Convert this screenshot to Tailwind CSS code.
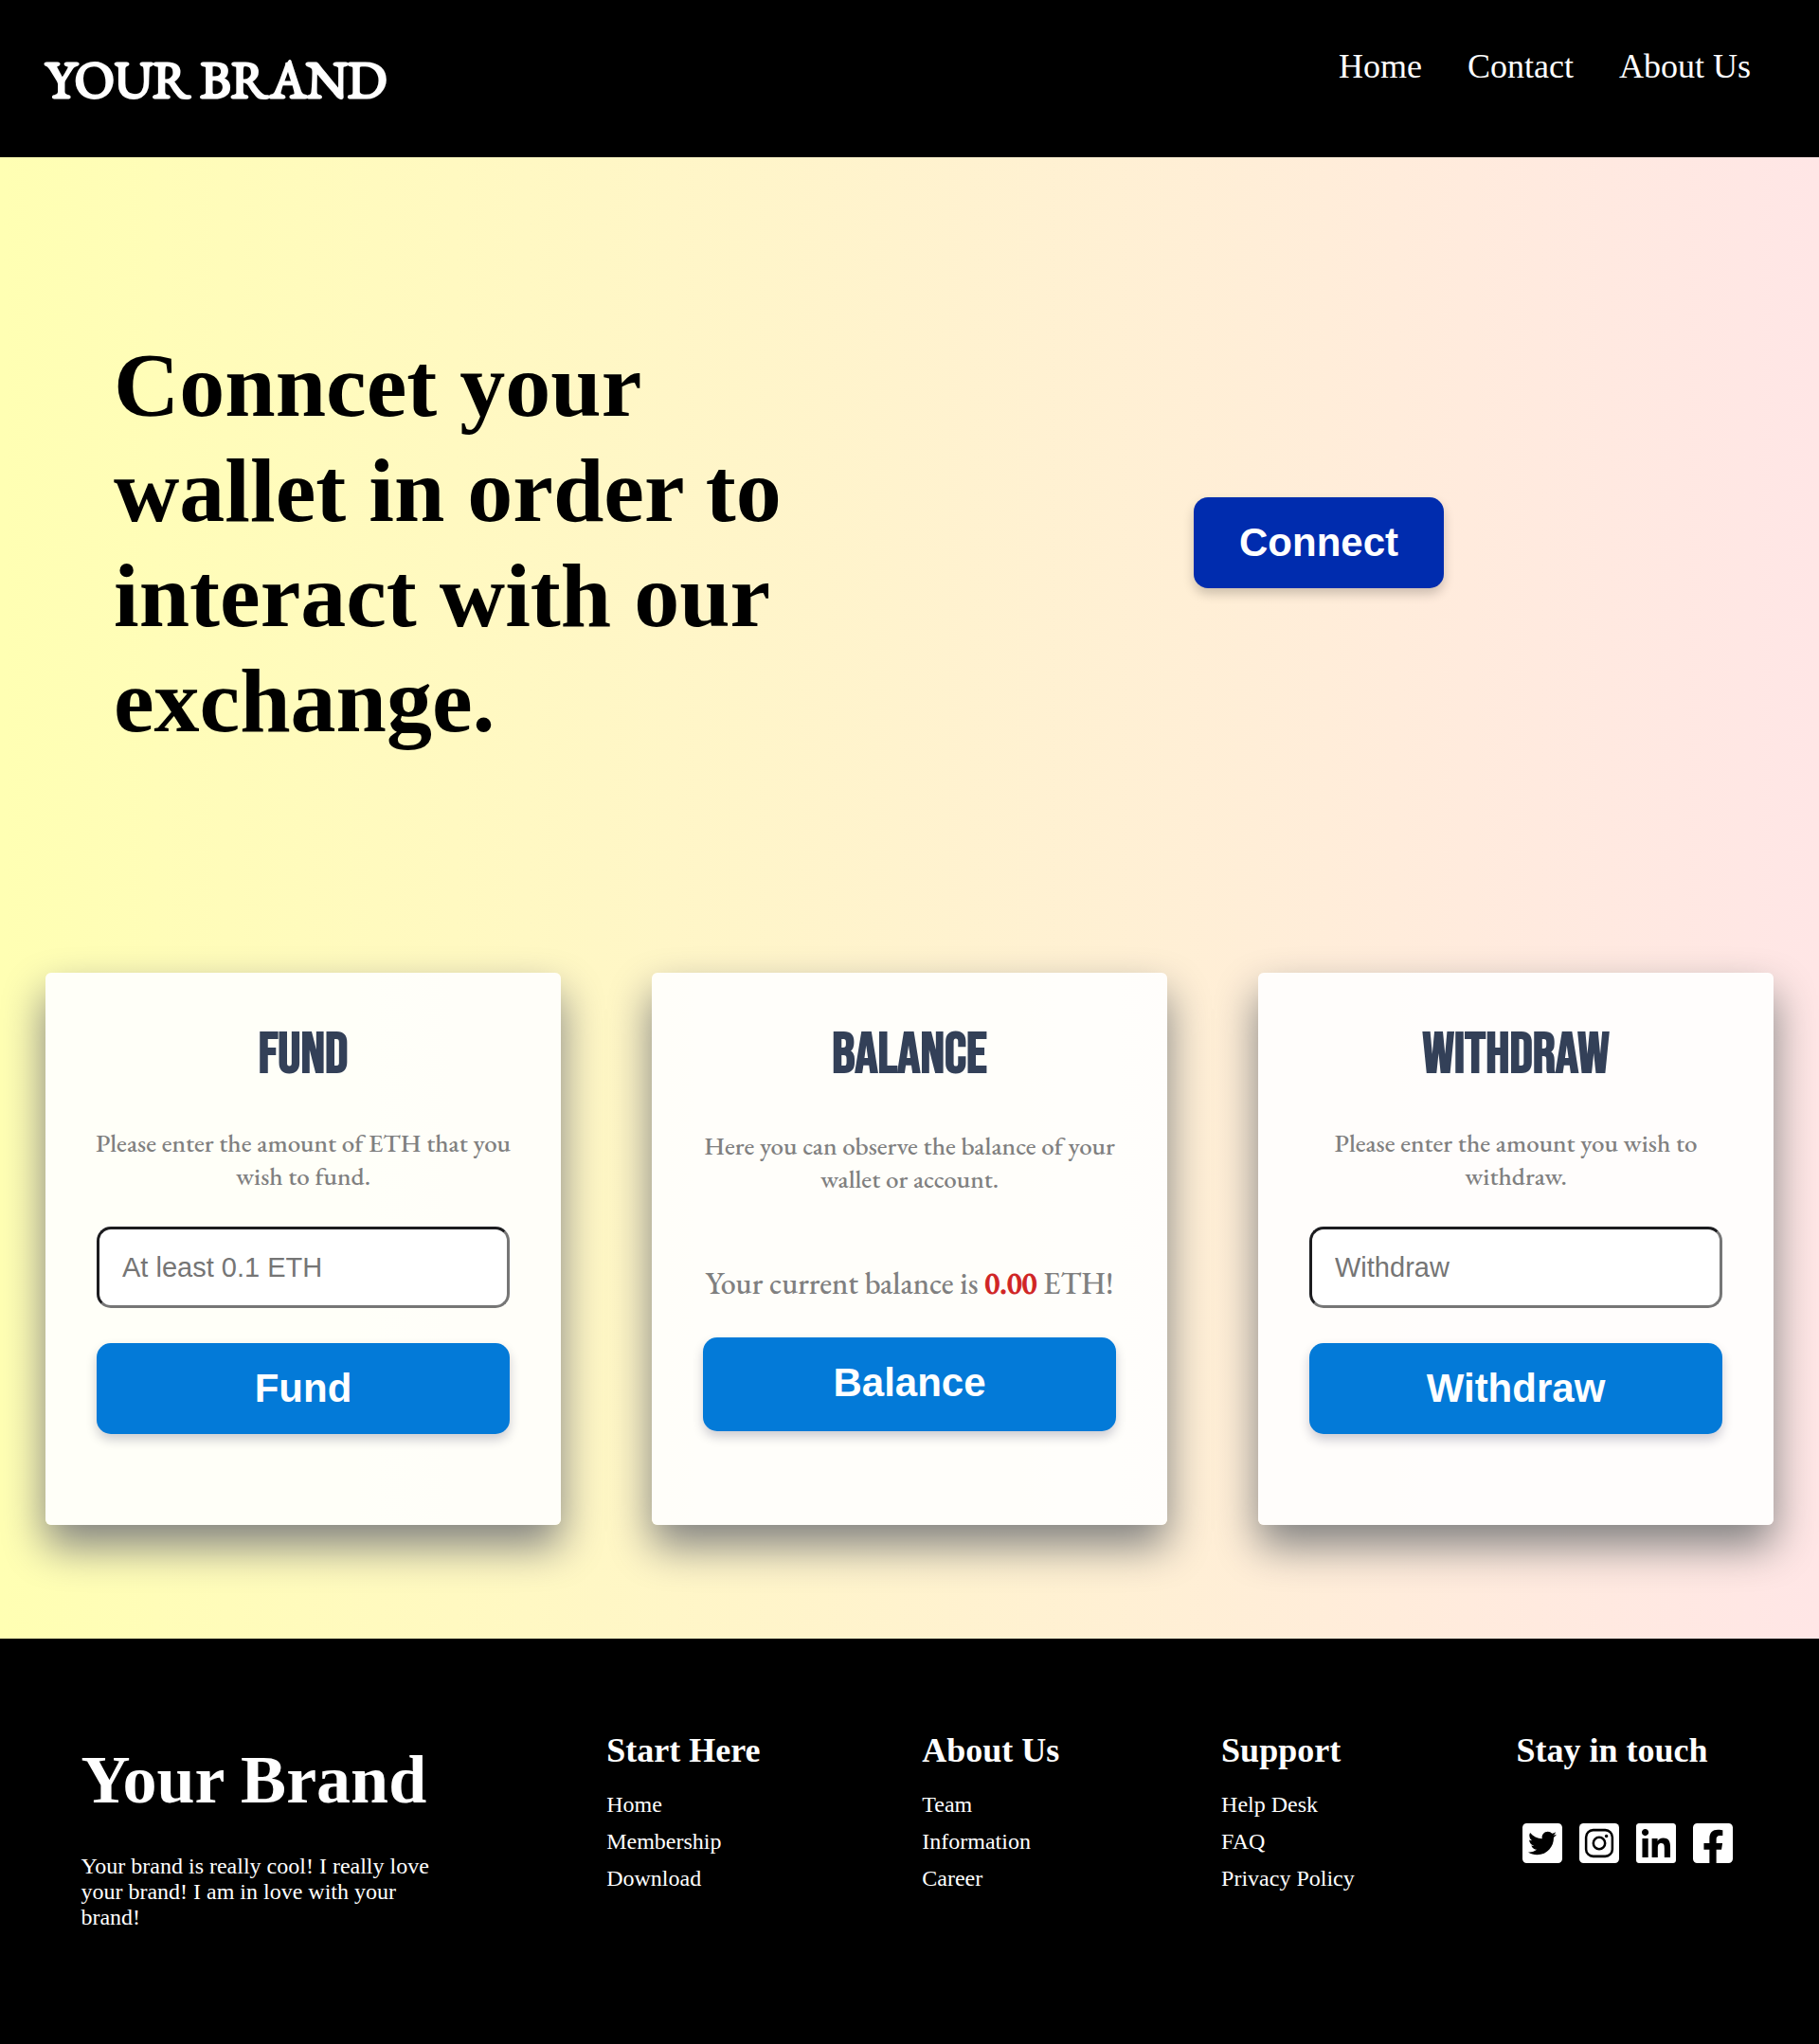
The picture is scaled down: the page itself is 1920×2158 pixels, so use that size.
<!DOCTYPE html>
<html lang="en">
<head>
<meta charset="utf-8">
<meta name="viewport" content="width=device-width, initial-scale=1">
<title>Your Brand</title>
<script src="https://cdn.jsdelivr.net/npm/@tailwindcss/browser@4"></script>
</head>
<body class="flex min-h-screen flex-col bg-black font-['Liberation_Serif',serif]">

<header class="flex items-start justify-between bg-black px-12 pt-12 pb-[46px] text-white">
  <a href="#" class="font-['EB_Garamond','Liberation_Serif',serif] text-[55px] leading-[72px] font-normal [-webkit-text-stroke:3px_white]">YOUR BRAND</a>
  <nav class="flex gap-12 pr-6 text-4xl leading-[44px]">
    <a href="#">Home</a>
    <a href="#">Contact</a>
    <a href="#">About Us</a>
  </nav>
</header>

<main class="bg-linear-to-r from-[#ffffb3] to-[#ffe6e6] pb-[120px]">
  <section class="grid grid-cols-[45%_55%] items-center pt-[185px] pb-[232px]">
    <h1 class="pl-30 text-8xl leading-[111px] font-bold text-black">Conncet your wallet in order to interact with our exchange.</h1>
    <div class="flex justify-center">
      <button type="button" class="rounded-[15px] bg-[#002cae] px-12 py-6 font-['Liberation_Sans',sans-serif] text-[42px] leading-[48px] font-bold text-white shadow-[0_6px_12px_rgba(0,0,0,0.2)]">Connect</button>
    </div>
  </section>

  <section class="grid grid-cols-3 gap-24 px-12 text-center font-['EB_Garamond','Liberation_Serif',serif] font-medium text-[#808080]">
    <form class="flex flex-col rounded-md bg-white/90 px-[54px] pt-12 pb-24 shadow-[0_22px_45px_#808080]">
      <h2 class="mb-9 font-['Bebas_Neue',Roboto,sans-serif] text-[60px] leading-[78px] font-bold text-[#334058]">FUND</h2>
      <label for="fund" class="-mx-1 text-[27px] leading-[35px]">Please enter the amount of ETH that you wish to fund.</label>
      <input id="fund" type="text" placeholder="At least 0.1 ETH" class="mt-9 h-[86px] w-full rounded-[15px] border-[3px] border-t-[#1c1c1f] border-r-[#767676] border-b-[#767676] border-l-[#1c1c1f] bg-white px-6 font-['Liberation_Sans',sans-serif] text-[29px] font-normal placeholder:text-[#757575]">
      <button type="button" class="mt-[37px] rounded-[15px] bg-[#037ad8] py-6 font-['Liberation_Sans',sans-serif] text-[42px] leading-[48px] font-bold text-white shadow-[0_6px_12px_rgba(0,0,50,0.2)]">Fund</button>
    </form>

    <div class="flex flex-col rounded-md bg-white/90 px-[54px] pt-12 pb-24 shadow-[0_22px_45px_#808080]">
      <h2 class="mb-[39px] font-['Bebas_Neue',Roboto,sans-serif] text-[60px] leading-[78px] font-bold text-[#334058]">BALANCE</h2>
      <p class="-mx-1 text-[27px] leading-[35px]">Here you can observe the balance of your wallet or account.</p>
      <p class="-mx-1 mt-[74px] text-[32px] leading-[38px] whitespace-nowrap">Your current balance is <strong class="font-medium text-[#d02424] [-webkit-text-stroke:1px_#d02424]">0.00</strong> ETH!</p>
      <button type="button" class="mt-[38px] rounded-[15px] bg-[#037ad8] pt-6 pb-[27px] font-['Liberation_Sans',sans-serif] text-[42px] leading-[48px] font-bold text-white shadow-[0_6px_12px_rgba(0,0,50,0.2)]">Balance</button>
    </div>

    <form class="flex flex-col rounded-md bg-white/90 px-[54px] pt-12 pb-24 shadow-[0_22px_45px_#808080]">
      <h2 class="mb-9 font-['Bebas_Neue',Roboto,sans-serif] text-[60px] leading-[78px] font-bold text-[#334058]">WITHDRAW</h2>
      <label for="withdraw" class="-mx-1 text-[27px] leading-[35px]">Please enter the amount you wish to<br>withdraw.</label>
      <input id="withdraw" type="text" placeholder="Withdraw" class="mt-9 h-[86px] w-full rounded-[15px] border-[3px] border-t-[#1c1c1f] border-r-[#767676] border-b-[#767676] border-l-[#1c1c1f] bg-white px-6 font-['Liberation_Sans',sans-serif] text-[29px] font-normal placeholder:text-[#757575]">
      <button type="button" class="mt-[37px] rounded-[15px] bg-[#037ad8] py-6 font-['Liberation_Sans',sans-serif] text-[42px] leading-[48px] font-bold text-white shadow-[0_6px_12px_rgba(0,0,50,0.2)]">Withdraw</button>
    </form>
  </section>
</main>

<footer class="flex grow items-start justify-around bg-black pt-[97px] pb-30 text-2xl text-white">
  <div class="w-1/5 pt-[10px]">
    <h2 class="text-7xl leading-[84px] font-bold">Your Brand</h2>
    <p class="mt-9 leading-[27px]">Your brand is really cool! I really love your brand! I am in love with your brand!</p>
  </div>
  <div>
    <h3 class="text-4xl leading-[42px] font-bold">Start Here</h3>
    <ul class="mt-[17px] leading-[39px]">
      <li><a href="#">Home</a></li>
      <li><a href="#">Membership</a></li>
      <li><a href="#">Download</a></li>
    </ul>
  </div>
  <div>
    <h3 class="text-4xl leading-[42px] font-bold">About Us</h3>
    <ul class="mt-[17px] leading-[39px]">
      <li><a href="#">Team</a></li>
      <li><a href="#">Information</a></li>
      <li><a href="#">Career</a></li>
    </ul>
  </div>
  <div>
    <h3 class="text-4xl leading-[42px] font-bold">Support</h3>
    <ul class="mt-[17px] leading-[39px]">
      <li><a href="#">Help Desk</a></li>
      <li><a href="#">FAQ</a></li>
      <li><a href="#">Privacy Policy</a></li>
    </ul>
  </div>
  <div>
    <h3 class="text-4xl leading-[42px] font-bold">Stay in touch</h3>
    <div class="mt-[53px] flex gap-3 px-[3px]">
      <a href="#" aria-label="Twitter"><svg class="size-12" viewBox="-32 0 512 512" fill="currentColor"><path d="M400 32H48C21.5 32 0 53.5 0 80v352c0 26.5 21.5 48 48 48h352c26.500 0 48-21.500 48-48V80c0-26.500-21.500-48-48-48zm-48.900 158.800c.2 2.800.2 5.700.2 8.500 0 86.700-66 186.600-186.600 186.600-37.200 0-71.700-10.800-100.700-29.400 5.300.6 10.400.8 15.800.8 30.700 0 58.900-10.400 81.400-28-28.800-.6-53-19.500-61.300-45.500 10.100 1.500 19.200 1.500 29.600-1.200-30-6.100-52.500-32.500-52.500-64.400v-.8c8.700 4.900 18.900 7.900 29.600 8.300a65.447 65.447 0 0 1-29.200-54.600c0-12.200 3.200-23.400 8.900-33.100 32.300 39.800 80.800 65.800 135.200 68.600-9.300-44.500 24-80.600 64-80.600 18.900 0 35.900 7.900 47.900 20.700 14.800-2.800 29-8.300 41.600-15.800-4.900 15.200-15.200 28-28.800 36.100 13.200-1.400 26-5.100 37.800-10.200-8.900 13.100-20.100 24.700-32.900 34z"/></svg></a>
      <a href="#" aria-label="Instagram"><svg class="size-12" viewBox="-32 0 512 512" fill="none"><rect y="32" width="448" height="448" rx="48" fill="white"/><rect x="76" y="108" width="296" height="296" rx="80" stroke="black" stroke-width="27"/><circle cx="224" cy="256" r="66" stroke="black" stroke-width="27"/><circle cx="305" cy="176" r="18" fill="black"/></svg></a>
      <a href="#" aria-label="LinkedIn"><svg class="size-12" viewBox="-32 0 512 512" fill="currentColor"><path d="M416 32H31.900C14.300 32 0 46.500 0 64.300v383.400C0 465.500 14.300 480 31.900 480H416c17.600 0 32-14.500 32-32.300V64.300c0-17.800-14.400-32.300-32-32.300zM135.400 416H69V202.200h66.500V416zm-33.200-243c-21.300 0-38.500-17.300-38.500-38.500S80.900 96 102.200 96c21.200 0 38.500 17.300 38.500 38.500 0 21.300-17.200 38.500-38.500 38.500zm282.100 243h-66.400V312c0-24.800-.5-56.700-34.500-56.700-34.600 0-39.900 27-39.900 54.900V416h-66.400V202.200h63.700v29.200h.9c8.900-16.800 30.600-34.500 62.900-34.500 67.200 0 79.700 44.300 79.700 101.900V416z"/></svg></a>
      <a href="#" aria-label="Facebook"><svg class="size-12" viewBox="-32 0 512 512" fill="currentColor"><path d="M400 32H48A48 48 0 0 0 0 80v352a48 48 0 0 0 48 48h137.250V327.690h-63V256h63v-54.640c0-62.150 37-96.480 93.670-96.480 27.140 0 55.520 4.840 55.520 4.840v61h-31.270c-30.810 0-40.420 19.120-40.420 38.730V256h68.780l-11 71.690h-57.780V480H400a48 48 0 0 0 48-48V80a48 48 0 0 0-48-48z"/></svg></a>
    </div>
  </div>
</footer>

</body>
</html>
